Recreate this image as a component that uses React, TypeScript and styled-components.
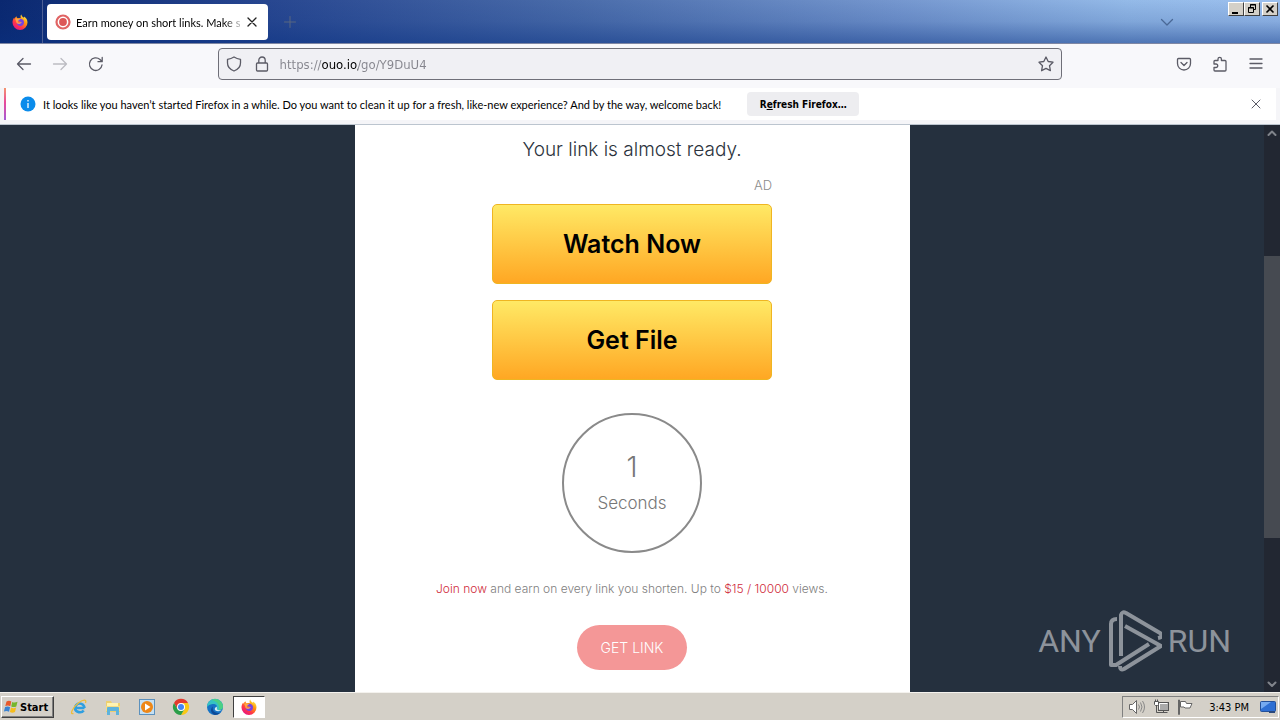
import React from "react";
import styled, { createGlobalStyle, css } from "styled-components";

const uiFont = '"DejaVu Sans Condensed", "DejaVu Sans", sans-serif';
const textFont = 'Lato, "DejaVu Sans Condensed", sans-serif';
const pageFont = 'Inter, "Liberation Sans", sans-serif';

const GlobalStyle = createGlobalStyle`
  * { box-sizing: border-box; }
  body { margin: 0; font-family: ${uiFont}; }
  button { font: inherit; color: inherit; margin: 0; padding: 0; border: 0; background: none; }
  svg { display: block; flex: none; }
`;

const Desktop = styled.div`
  display: flex;
  flex-direction: column;
  min-height: 100vh;
`;

/* ---------- title bar ---------- */

const TitleBar = styled.header`
  display: flex;
  height: 44px;
  flex: none;
  color: #000;
  font-family: ${textFont};
  font-size: 11px;
  border-bottom: 1px solid #7f87a3;
  background:
    linear-gradient(180deg, rgba(10, 50, 130, 0) 0, rgba(10, 50, 130, 0.15) 50%, rgba(10, 50, 130, 0.5) 100%),
    linear-gradient(90deg, #0a2870 0, #26458f 20%, #4a6caa 45%, #7597cf 70%, #94bae8 88%, #9cc0ee 100%);
`;

const HomeTab = styled.button`
  display: flex;
  align-items: center;
  justify-content: center;
  width: 43px;
  padding-right: 3px;
  border-right: 1px solid #4c5f95;
`;

const Tab = styled.div`
  display: flex;
  align-items: center;
  gap: 4px;
  width: 221px;
  height: 36px;
  margin: 4px 0 0 4px;
  padding: 0 8px;
  border-radius: 4px;
  background: #fff;
`;

const TabTitle = styled.span`
  flex: 1;
  min-width: 0;
  padding-left: 1px;
  overflow: hidden;
  white-space: nowrap;
  mask-image: linear-gradient(90deg, #000 90%, transparent 104%);
`;

const IconButton = styled.button`
  display: flex;
  align-items: center;
  justify-content: center;
  width: 16px;
  height: 16px;
`;

const NewTab = styled(IconButton)`
  align-self: center;
  margin-left: 14px;
`;

const TitleEnd = styled.div`
  display: flex;
  margin-left: auto;
`;

const ListTabs = styled(IconButton)`
  align-self: center;
  margin-right: 53px;
`;

const WindowButtons = styled.div`
  display: flex;
  padding: 2px 2px 0 0;
`;

const WindowButton = styled.button<{ $gap?: boolean }>`
  display: flex;
  align-items: center;
  justify-content: center;
  width: 16px;
  height: 14px;
  margin-left: ${(p) => (p.$gap ? 2 : 0)}px;
  background: #d4d0c8;
  border: 1px solid;
  border-color: #fff #404040 #404040 #fff;
`;

/* ---------- navigation ---------- */

const NavBar = styled.nav`
  display: grid;
  grid-template-columns: 17% 1fr 17%;
  align-items: center;
  height: 44px;
  flex: none;
  padding-bottom: 4px;
  background: #f8f8fb;
`;

const NavGroup = styled.div<{ $end?: boolean }>`
  display: flex;
  gap: 20px;
  ${(p) =>
    p.$end
      ? css`justify-content: flex-end; padding-right: 16px;`
      : css`padding-left: 16px;`}
`;

const AddressBar = styled.div`
  display: flex;
  align-items: center;
  gap: 12px;
  height: 32px;
  padding: 0 7px;
  border: 1px solid #6f6f78;
  border-radius: 4px;
  background: #f0f0f4;
`;

const AddressInput = styled.input`
  flex: 1;
  min-width: 0;
  height: 24px;
  margin-left: -2px;
  padding: 0;
  border: 0;
  outline: 0;
  font-family: ${uiFont};
  font-size: 13px;
  color: transparent;
  background: linear-gradient(90deg, #85858d 0 42px, #000 42px 78px, #85858d 78px);
  background-clip: text;
  -webkit-background-clip: text;
`;

/* ---------- notification ---------- */

const NoticeStrip = styled.div`
  flex: none;
  padding: 0 4px 4px;
  background: #f5f5f8;
  border-bottom: 1px solid #bcc5cf;
`;

const Notice = styled.div`
  display: flex;
  align-items: center;
  height: 32px;
  padding: 0 12px 0 14px;
  border-left: 2px solid;
  border-image: linear-gradient(180deg, #f59a6c, #e84a9a 45%, #a05bd8) 1;
  background: #fff;
`;

const NoticeText = styled.span`
  margin: 0 26px 0 7px;
  font-family: ${textFont};
  font-size: 11px;
  color: #000;
  white-space: nowrap;
`;

const RefreshButton = styled.button`
  width: 112px;
  height: 24px;
  border-radius: 4px;
  background: #ededf0;
  font-size: 10px;
  font-weight: 700;
`;

const NoticeClose = styled(IconButton)`
  margin-left: auto;
`;

/* ---------- web page ---------- */

const Viewport = styled.div`
  position: relative;
  display: flex;
  flex: 1;
  background: #25303e;
  font-family: ${pageFont};
`;

const PageArea = styled.main`
  display: flex;
  flex: 1;
  justify-content: center;
`;

const Card = styled.section`
  display: flex;
  flex-direction: column;
  align-items: center;
  width: 100%;
  max-width: 555px;
  padding-bottom: 22px;
  background: #fff;
`;

const Heading = styled.h1`
  margin: 13px 0 0;
  font-size: 19px;
  line-height: 24px;
  font-weight: 300;
  color: #2c333d;
`;

const AdBlock = styled.div`
  display: flex;
  flex-direction: column;
  gap: 16px;
  width: 280px;
  margin-top: 14px;
`;

const AdLabel = styled.span`
  margin-bottom: -6px;
  text-align: right;
  font-size: 13px;
  line-height: 18px;
  font-weight: 300;
  color: #8c8c8c;
`;

const AdButton = styled.button`
  height: 80px;
  border: 1px solid #efb522;
  border-radius: 5px;
  background: linear-gradient(180deg, #ffe965, #ffa723);
  font-size: 25px;
  font-weight: 600;
  color: #000;
`;

const Counter = styled.div`
  display: flex;
  flex-direction: column;
  align-items: center;
  width: 140px;
  height: 140px;
  margin-top: 33px;
  padding-top: 32px;
  border: 2px solid #8a8a8a;
  border-radius: 50%;
  color: #777;
  font-size: 17px;
  line-height: 32px;
  font-weight: 300;
`;

const Count = styled.span`
  font-size: 28px;
  line-height: 40px;
`;

const Promo = styled.p`
  margin: 26px 0;
  font-size: 12px;
  line-height: 20px;
  font-weight: 300;
  color: #808080;
`;

const PromoLink = styled.a`
  color: #d02c3c;
  text-decoration: none;
`;

const GetLink = styled.button`
  width: 110px;
  height: 45px;
  border-radius: 23px;
  background: #f49797;
  font-size: 14px;
  font-weight: 300;
  color: #fff;
`;

const ScrollBar = styled.div`
  display: flex;
  flex-direction: column;
  width: 16px;
  flex: none;
  background: #222732;
`;

const ScrollTrack = styled.div`
  display: grid;
  grid-template-rows: 115fr 282fr 138fr;
  flex: 1;
`;

const ScrollThumb = styled.div`
  grid-row: 2;
  background: #464a51;
`;

const Watermark = styled.div`
  position: absolute;
  right: 49px;
  bottom: 20px;
  display: flex;
  align-items: center;
  gap: 6px;
  font-family: Roboto, "Liberation Sans", sans-serif;
  font-size: 32px;
  line-height: 62px;
  color: #8d939b;
`;

/* ---------- task bar ---------- */

const TaskBar = styled.footer`
  display: flex;
  align-items: center;
  height: 28px;
  flex: none;
  padding: 1px 1px 0 1px;
  border-top: 1px solid #f4f2ee;
  background: #d4d0c8;
  font-size: 11px;
`;

const StartButton = styled.button`
  display: flex;
  align-items: center;
  gap: 1px;
  width: 53px;
  height: 22px;
  padding-left: 1px;
  border: 1px solid;
  border-color: #fff #404040 #404040 #fff;
  box-shadow: inset -1px -1px 0 #808080;
  font-size: 11px;
  font-weight: 700;
`;

const QuickLaunch = styled.div`
  display: flex;
  margin-left: 9px;
`;

const TaskButton = styled.button<{ $active?: boolean }>`
  display: flex;
  align-items: center;
  justify-content: center;
  width: 32px;
  height: 22px;
  margin-right: 2px;
  ${(p) =>
    p.$active &&
    css`
      background: #fff;
      border: 1px solid;
      border-color: #404040 #fff #fff #404040;
    `}
`;

const Tray = styled.div`
  display: flex;
  align-items: center;
  gap: 7px;
  height: 22px;
  margin-left: auto;
  padding: 0 2px 0 5px;
  border: 1px solid;
  border-color: #808080 #fff #fff #808080;
`;

const Clock = styled.time`
  margin: 0 4px 0 8px;
  white-space: nowrap;
`;

/* ---------- icons ---------- */

const Line = ({ d, size = 16, color = "#5b5b66", width = 1.3 }: { d: string; size?: number; color?: string; width?: number }) => (
  <svg width={size} height={size} viewBox="0 0 16 16" fill="none" stroke={color} strokeWidth={width} strokeLinecap="round" strokeLinejoin="round">
    <path d={d} />
  </svg>
);

const Firefox = ({ id }: { id: string }) => (
  <svg width="16" height="16" viewBox="0 0 16 16">
    <defs>
      <linearGradient id={id} x1="0.85" y1="0.05" x2="0.2" y2="0.95">
        <stop offset="0" stopColor="#fff44f" />
        <stop offset="0.35" stopColor="#ff980e" />
        <stop offset="0.7" stopColor="#ff3647" />
        <stop offset="1" stopColor="#e31587" />
      </linearGradient>
    </defs>
    <path fill={`url(#${id})`} d="M9.300.4c.2 1.600 1.500 2.300 2.500 3.300.4-.3.4-.8.3-1.300 2.200 1.300 3.400 3.600 3.400 6A7.500 7.500 0 0 1 .5 8.400c0-2 .7-3.600 1.700-5 0 .6 0 1 .3 1.400C3.100 3.600 3.700 2.800 4.500 2.200c0 .8.3 1.500.9 2L9 3.700C8.300 2.600 8.400 1.300 9.300.4Z" />
    <path fill="#7542e5" d="M8.200 4.800c2.200 0 3.800 1.500 3.800 3.500a3.700 3.700 0 0 1-3.800 3.600c-2 0-3.500-1.300-3.600-3.200.8.7 1.900.8 2.800.2.600-.4 1.200-.5 1.700-.5-.2-.7-.8-1-1.700-1l-1.600-.6c.2-1 .9-1.900 2.400-2Z" />
    <path fill="#ffbd4f" d="M2.800 4.800c1.200-.8 2.500-.7 3.600 0 .5.3 1 .3 1.700.3-.1.800-1.300 1-1.700 1.600-.1.500-.5.8-.8 1.200.8.9 2 .9 3 .3.500-.2.900-.1 1.100.3-.7 1.500-3.700 2.400-5.300.2-.4-1.500-.5-2.900-1.600-3.900Z" opacity=".7" />
  </svg>
);

const Favicon = () => (
  <svg width="16" height="16" viewBox="0 0 16 16">
    <circle cx="8" cy="8" r="6.500" fill="#fff" stroke="#e06464" strokeWidth="2.200" />
    <circle cx="8" cy="8" r="3.900" fill="#dd5757" />
  </svg>
);

const Info = () => (
  <svg width="16" height="16" viewBox="0 0 16 16">
    <circle cx="8" cy="8" r="7.500" fill="#0b8ceb" />
    <path d="M8 4v1.400M8 7v5" stroke="#fff" strokeWidth="1.300" />
  </svg>
);

const PlayMark = () => (
  <svg width="55" height="62" viewBox="-2 0 55 62" fill="none" stroke="#8d939b" strokeWidth="4" strokeLinejoin="round">
    <path d="M8 9Q2 9 2 14V55L7 55L40 34" />
    <path d="M12 46V5Q13 1 17 3L51 23Q55 27 49 28" />
    <path d="M16 16L52 36L15 59Q11 61 11 56" />
  </svg>
);

const WindowsFlag = () => (
  <svg width="16" height="16" viewBox="0 0 16 16">
    <path fill="#e8592b" d="M3.500 2.500Q6 1 8.300 2.500L7.300 7.200Q5 5.800 2.300 7Z" />
    <path fill="#76b62d" d="M9.200 3Q11.500 4.200 14.500 2.800L13.300 7.500Q10.700 8.700 8.200 7.500Z" />
    <path fill="#3b83d2" d="M2.100 8Q4.700 6.800 7.100 8.200L6 12.700Q3.500 11.500.9 12.600Z" />
    <path fill="#f6bd1d" d="M8 8.500Q10.500 9.800 13.100 8.500L12 13Q9.400 14.300 6.900 13.100Z" />
  </svg>
);

const Explorer = () => (
  <svg width="18" height="18" viewBox="0 0 18 18" fill="none">
    <path d="M14.500 10H5.200M5 10.500a4.600 4.600 0 1 1 9.500-.5M5 10.500c.6 4 6.500 5 8.700 2" stroke="#2f9fe0" strokeWidth="2.600" />
    <path d="M3.500 15.500C-1 17 3 9 9 4.500c4-3 8-3.500 6.500.5" stroke="#efbd38" strokeWidth="1.300" />
  </svg>
);

const Folder = () => (
  <svg width="18" height="18" viewBox="0 0 18 18">
    <path fill="#edcf6f" d="M2 3h5l1 2h8v9H2z" />
    <path fill="#fff3b0" d="M3 5h11v4H3z" />
    <path fill="#f4dc85" d="M2 8h14v5H2z" />
    <path fill="#5eb3dc" d="M3 10q0-1 1-1h10q1 0 1 1v7h-3v-4H6v4H3z" />
  </svg>
);

const MediaPlayer = () => (
  <svg width="18" height="18" viewBox="0 0 18 18">
    <rect x="1.500" y="1.500" width="15" height="15" fill="#c5e0f3" stroke="#5c91bd" />
    <circle cx="9" cy="9" r="6" fill="#ee8717" />
    <path fill="#fff" d="M7 5.500L12.500 9 7 12.500z" />
  </svg>
);

const Chrome = () => (
  <svg width="18" height="18" viewBox="0 0 18 18">
    <path fill="#e33b2e" d="M2 5a8 8 0 0 1 14 0H9L5.500 11z" />
    <path fill="#f9c816" d="M16 5a8 8 0 0 1-7 12l3.500-6L9 5z" />
    <path fill="#2b9e49" d="M2 5a8 8 0 0 0 7 12l3.500-6h-7z" />
    <circle cx="9" cy="9" r="4" fill="#fff" />
    <circle cx="9" cy="9" r="3" fill="#4285f4" />
  </svg>
);

const Edge = () => (
  <svg width="18" height="18" viewBox="0 0 18 18">
    <circle cx="9" cy="9" r="8" fill="#1673c5" />
    <path fill="#35c3c3" d="M1 9a8 8 0 0 1 16-.5c0 2.500-2 3.700-4.500 3.500-1.500 0-2.300-.7-1.700-1.500C12 8 10 5.500 6.500 6 4 6.300 2 7.500 1 9Z" />
    <path fill="#56d66b" d="M9 1a8 8 0 0 1 8 7.500c0 2-1.500 3.500-4 3.500 1-4-1-9-8-10Z" opacity=".7" />
    <path fill="#0d4a97" d="M7 8.500c-1.500 4 2 7 7 6.500A8 8 0 0 1 9 17C5 16 3.500 11 7 8.500Z" />
    <path fill="#d4eef2" d="M10.500 8.500q1 1.500.3 2.500 1 2 5 1-3 2-6 .8-2.500-1.800.7-4.300Z" />
  </svg>
);

const Speaker = () => (
  <svg width="18" height="16" viewBox="0 0 18 16" fill="none" stroke="#666">
    <path fill="#fff" d="M1.500 5.500h3l4-4v13l-4-4h-3z" />
    <path d="M10.500 5.500q2 2.500 0 5M12.500 3.500q3 4.500 0 9M14.500 2q4 6 0 12" stroke="#888" />
  </svg>
);

const Network = () => (
  <svg width="17" height="16" viewBox="0 0 17 16" fill="none" stroke="#555">
    <rect x="5.500" y="3.500" width="10" height="8" fill="#aaa" />
    <path d="M6.500 10.500V4.500H14.500" stroke="#fff" />
    <path fill="#fff" d="M1.500 2.500h4v3l-1 1h-2l-1-1z" />
    <path d="M2.500 2.500v-2M4.500 2.500v-2M3.500 6.500v7h11M10.500 11.500v2" />
  </svg>
);

const Flag = () => (
  <svg width="17" height="16" viewBox="0 0 17 16" fill="#fff" stroke="#666">
    <path d="M1.500 1v14.500h1V1z" />
    <path d="M3.500 2.500h5l1 2h5.500l-2 4.500H8l-1-1H3.500z" />
  </svg>
);

const Monitor = () => (
  <svg width="16" height="16" viewBox="0 0 16 16">
    <rect x=".5" y="2.500" width="15" height="10" rx="1" fill="#2e6fd3" stroke="#235099" />
    <path fill="#75aaf0" d="M1 3h10L1 10z" />
    <path fill="#29487c" d="M9 12h6v2H9z" />
  </svg>
);

const cross = "M4 4l8 8M12 4l-8 8";

export default function App() {
  return (
    <Desktop>
      <GlobalStyle />
      <TitleBar>
        <HomeTab aria-label="Firefox View"><Firefox id="ff-title" /></HomeTab>
        <Tab>
          <Favicon />
          <TabTitle>Earn money on short links. Make sh</TabTitle>
          <IconButton aria-label="Close tab"><Line d={cross} color="#222" /></IconButton>
        </Tab>
        <NewTab aria-label="New tab"><Line d="M8 2.500v11M2.500 8h11" color="#596780" width={1} /></NewTab>
        <TitleEnd>
          <ListTabs aria-label="List all tabs"><Line d="M2.500 5.500L8 11l5.500-5.500" color="#4a6896" /></ListTabs>
          <WindowButtons>
            <WindowButton aria-label="Minimize"><svg width="10" height="10"><path d="M1 8h6v2H1z" /></svg></WindowButton>
            <WindowButton aria-label="Restore">
              <svg width="10" height="10" fill="none" stroke="#000"><path d="M3.500 3V.5h5v5H7M3 1h6M1.500 3.500h5v5h-5zM1 4h6" /></svg>
            </WindowButton>
            <WindowButton aria-label="Close" $gap>
              <svg width="10" height="10" stroke="#000" strokeWidth="1.600"><path d="M1.500 1.500l7 7M8.500 1.500l-7 7" /></svg>
            </WindowButton>
          </WindowButtons>
        </TitleEnd>
      </TitleBar>

      <NavBar>
        <NavGroup>
          <IconButton aria-label="Back"><Line d="M14.500 8h-13M7 2.500L1.500 8 7 13.500" /></IconButton>
          <IconButton aria-label="Forward"><Line d="M1.500 8h13M9 2.500L14.500 8 9 13.500" color="#bcbcc2" /></IconButton>
          <IconButton aria-label="Reload"><Line d="M14 9a6.300 6.300 0 1 1-2-5.500l2 2M14.200 1.500v4.200H10" /></IconButton>
        </NavGroup>
        <AddressBar>
          <Line d="M8 1C10 2.300 12 3 14.500 3.300V7c0 3.500-2.500 6.500-6.500 8C4 13.500 1.500 10.500 1.500 7V3.300C4 3 6 2.300 8 1Z" />
          <Line d="M3.500 7h9q1 0 1 1v6q0 1-1 1h-9q-1 0-1-1V8q0-1 1-1ZM4.800 7V4.200a3.200 3.200 0 0 1 6.400 0V7" />
          <AddressInput aria-label="Address" defaultValue="https://ouo.io/go/Y9DuU4" />
          <Line d="M8 1l2.200 4.500 4.800.7-3.500 3.500.9 5L8 12.400l-4.400 2.300.9-5L1 6.200l4.800-.7z" />
        </AddressBar>
        <NavGroup $end>
          <IconButton aria-label="Pocket"><Line d="M2.500 2.500h11q1 0 1 1V7.500a6.500 6.500 0 0 1-13 0V3.500q0-1 1-1ZM5 6.500l3 3 3-3" /></IconButton>
          <IconButton aria-label="Extensions"><Line d="M2 8V5.500q0-1 1-1h3V3a1.700 1.700 0 0 1 3.400 0v1.500H13q1 0 1 1V14q0 1-1 1H3q-1 0-1-1v-2.500h2a1.700 1.700 0 0 0 0-3.500z" /></IconButton>
          <IconButton aria-label="Menu"><Line d="M2 3h12M2 7.500h12M2 12h12" /></IconButton>
        </NavGroup>
      </NavBar>

      <NoticeStrip>
        <Notice role="status">
          <Info />
          <NoticeText>
            It looks like you haven’t started Firefox in a while. Do you want to clean it up for a fresh, like-new experience? And by the way, welcome back!
          </NoticeText>
          <RefreshButton>R<u>e</u>fresh Firefox…</RefreshButton>
          <NoticeClose aria-label="Close notification"><Line d={cross} width={1} /></NoticeClose>
        </Notice>
      </NoticeStrip>

      <Viewport>
        <PageArea>
          <Card>
            <Heading>Your link is almost ready.</Heading>
            <AdBlock>
              <AdLabel>AD</AdLabel>
              <AdButton>Watch Now</AdButton>
              <AdButton>Get File</AdButton>
            </AdBlock>
            <Counter><Count>1</Count>Seconds</Counter>
            <Promo>
              <PromoLink href="#join">Join now</PromoLink> and earn on every link you shorten. Up to{" "}
              <PromoLink href="#rates">$15 / 10000</PromoLink> views.
            </Promo>
            <GetLink>GET LINK</GetLink>
          </Card>
        </PageArea>
        <ScrollBar>
          <IconButton aria-label="Scroll up"><Line d="M4.500 10L8 6.500l3.500 3.500" color="#80848b" width={2} /></IconButton>
          <ScrollTrack><ScrollThumb /></ScrollTrack>
          <IconButton aria-label="Scroll down"><Line d="M4.500 6.500L8 10l3.500-3.500" color="#80848b" width={2} /></IconButton>
        </ScrollBar>
        <Watermark>
          <span>ANY</span>
          <PlayMark />
          <span>RUN</span>
        </Watermark>
      </Viewport>

      <TaskBar>
        <StartButton><WindowsFlag />Start</StartButton>
        <QuickLaunch>
          <TaskButton aria-label="Internet Explorer"><Explorer /></TaskButton>
          <TaskButton aria-label="File Explorer"><Folder /></TaskButton>
          <TaskButton aria-label="Media Player"><MediaPlayer /></TaskButton>
          <TaskButton aria-label="Chrome"><Chrome /></TaskButton>
          <TaskButton aria-label="Edge"><Edge /></TaskButton>
          <TaskButton aria-label="Firefox" $active><Firefox id="ff-task" /></TaskButton>
        </QuickLaunch>
        <Tray>
          <Speaker />
          <Network />
          <Flag />
          <Clock>3:43 PM</Clock>
          <Monitor />
        </Tray>
      </TaskBar>
    </Desktop>
  );
}
